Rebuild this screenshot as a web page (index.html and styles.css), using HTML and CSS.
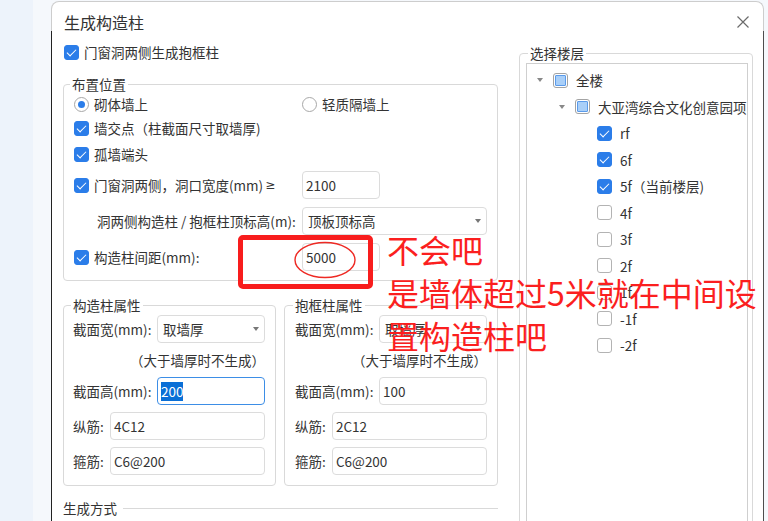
FILE: index.html
```html
<!DOCTYPE html>
<html lang="zh-CN">
<head>
  <meta charset="UTF-8">
  <title>生成构造柱</title>
  <link rel="stylesheet" href="styles.css">
</head>
<body>
<div class="page">
  <div class="strip-a"></div>
  <div class="strip-b"></div>

  <!-- Dialog -->
  <div class="dialog">
    <div class="dialog-head">
      <span class="dialog-title">生成构造柱</span>
      <svg class="close" width="12" height="12" viewBox="0 0 12 12"><path d="M0.5 0.5L11.5 11.5M11.5 0.5L0.5 11.5" stroke="#6b6b6b" stroke-width="1.2" fill="none"/></svg>
    </div>

    <div class="dialog-body">
      <div class="col-left">
        <div class="top-check"><span class="cb on"></span>门窗洞两侧生成抱框柱</div>

        <fieldset class="group place">
          <legend>布置位置</legend>
          <div class="row row-first">
            <span class="w-label"><span class="radio on"></span>砌体墙上</span>
            <span class="w-label"><span class="radio"></span>轻质隔墙上</span>
          </div>
          <div class="row"><span class="cb on"></span>墙交点（柱截面尺寸取墙厚)</div>
          <div class="row"><span class="cb on"></span>孤墙端头</div>
          <div class="row row-field">
            <span class="w-label"><span class="cb on"></span>门窗洞两侧，洞口宽度(mm)<span class="sym">≥</span></span>
            <span class="input short">2100</span>
          </div>
          <div class="row row-field">
            <span class="w-label sub-label">洞两侧构造柱 / 抱框柱顶标高(m):</span>
            <span class="input select long">顶板顶标高<i class="caret"></i></span>
          </div>
          <div class="row row-field">
            <span class="w-label"><span class="cb on"></span>构造柱间距(mm):</span>
            <span class="input short">5000</span>
          </div>
        </fieldset>

        <div class="props">
          <fieldset class="group prop prop-left">
            <legend>构造柱属性</legend>
            <div class="prop-row">
              <span class="lab-wide">截面宽(mm):</span>
              <span class="input select fill">取墙厚<i class="caret"></i></span>
            </div>
            <div class="note-row">（大于墙厚时不生成）</div>
            <div class="prop-row">
              <span class="lab-wide">截面高(mm):</span>
              <span class="input fill focus"><span class="sel">200</span></span>
            </div>
            <div class="prop-row">
              <span class="lab-short">纵筋:</span>
              <span class="input fill">4C12</span>
            </div>
            <div class="prop-row">
              <span class="lab-short">箍筋:</span>
              <span class="input fill">C6@200</span>
            </div>
          </fieldset>

          <fieldset class="group prop prop-right">
            <legend>抱框柱属性</legend>
            <div class="prop-row">
              <span class="lab-wide">截面宽(mm):</span>
              <span class="input select fill">取墙厚<i class="caret"></i></span>
            </div>
            <div class="note-row">（大于墙厚时不生成）</div>
            <div class="prop-row">
              <span class="lab-wide">截面高(mm):</span>
              <span class="input fill">100</span>
            </div>
            <div class="prop-row">
              <span class="lab-short">纵筋:</span>
              <span class="input fill">2C12</span>
            </div>
            <div class="prop-row">
              <span class="lab-short">箍筋:</span>
              <span class="input fill">C6@200</span>
            </div>
          </fieldset>
        </div>

        <div class="section-line">生成方式</div>
      </div>

      <div class="col-right">
        <fieldset class="group floors">
          <legend>选择楼层</legend>
          <div class="tree">
            <div class="tree-row"><span class="arrow"></span><span class="cb part"></span>全楼</div>
            <div class="tree-row lv1"><span class="arrow"></span><span class="cb part"></span>大亚湾综合文化创意园项目</div>
            <div class="tree-row lv2"><span class="spacer"></span><span class="cb on"></span>rf</div>
            <div class="tree-row lv2"><span class="spacer"></span><span class="cb on"></span>6f</div>
            <div class="tree-row lv2"><span class="spacer"></span><span class="cb on"></span>5f（当前楼层)</div>
            <div class="tree-row lv2"><span class="spacer"></span><span class="cb"></span>4f</div>
            <div class="tree-row lv2"><span class="spacer"></span><span class="cb"></span>3f</div>
            <div class="tree-row lv2"><span class="spacer"></span><span class="cb"></span>2f</div>
            <div class="tree-row lv2"><span class="spacer"></span><span class="cb"></span>1f</div>
            <div class="tree-row lv2"><span class="spacer"></span><span class="cb"></span>-1f</div>
            <div class="tree-row lv2"><span class="spacer"></span><span class="cb"></span>-2f</div>
          </div>
        </fieldset>
      </div>
    </div>
  </div>

  <!-- Red annotations drawn over the dialog -->
  <div class="mark-box"></div>
  <svg class="mark-ring" width="64" height="40" viewBox="0 0 64 40"><ellipse cx="32" cy="20" rx="30" ry="17.5" fill="none" stroke="#ee2a24" stroke-width="1.4"/></svg>
  <div class="mark-text">不会吧<br>是墙体超过5米就在中间设<br>置构造柱吧</div>
</div>
</body>
</html>
```

FILE: styles.css
```css
* {
  box-sizing: border-box;
}
body {
  margin: 0;
  font-family: "Noto Sans CJK SC", "Microsoft YaHei", sans-serif;
  font-size: 13.5px;
  color: #333;
  background: #f5f8fc;
  overflow: hidden;
}
.page {
  position: relative;
  display: flex;
  width: 768px;
  height: 521px;
  overflow: hidden;
}
.strip-a {
  flex: none;
  width: 33px;
  background: #edf3fb;
}
.strip-b {
  flex: none;
  width: 18px;
}

/* dialog frame */
.dialog {
  flex: none;
  width: 713px;
  height: 560px;
  margin-top: 1px;
  display: flex;
  flex-direction: column;
}
.dialog-head {
  height: 30px;
  padding: 10px 14px 0 12px;
  border: 1px solid #cdcdcd;
  border-bottom: 0;
  border-radius: 8px 8px 0 0;
  background: #fff;
  display: flex;
  justify-content: space-between;
  align-items: center;
}
.dialog-title {
  font-size: 16px;
  line-height: 20px;
  color: #333;
}
.dialog-body {
  flex: 1;
  display: flex;
  background: #fff;
  border-left: 1px solid #222;
  border-right: 1px solid #4d4d4d;
}
.col-left {
  flex: none;
  width: 446px;
  padding: 12px 0 0 11px;
}
.col-right {
  flex: none;
  width: 234px;
  margin-left: 21px;
}

/* controls */
.cb {
  flex: none;
  width: 15px;
  height: 15px;
  margin-right: 5px;
  border: 1px solid #b3b3b3;
  border-radius: 3px;
  background: #fff;
  display: inline-flex;
  align-items: center;
  justify-content: center;
}
.cb.on {
  background: #2b7de9;
  border-color: #2b7de9;
}
.cb.on::after {
  content: "";
  width: 4px;
  height: 8px;
  border: solid #fff;
  border-width: 0 1.8px 1.8px 0;
  transform: translateY(-1px) rotate(45deg);
}
.cb.part {
  border-color: #a3a3a3;
}
.cb.part::after {
  content: "";
  width: 9px;
  height: 9px;
  border: 1px solid #5b9bea;
  border-radius: 1px;
  background: #a9cff8;
}
.radio {
  flex: none;
  width: 15px;
  height: 15px;
  margin-right: 5px;
  border: 1px solid #a8a8a8;
  border-radius: 50%;
  display: inline-flex;
  align-items: center;
  justify-content: center;
}
.radio.on::after {
  content: "";
  width: 7px;
  height: 7px;
  border-radius: 50%;
  background: #2b7de9;
}
.sym {
  font-family: "DejaVu Sans", sans-serif;
  font-size: 12px;
  margin-left: 2px;
}
.input {
  height: 28px;
  padding: 0 3px;
  border: 1px solid #dcdcdc;
  border-radius: 4px;
  background: #fff;
  display: flex;
  align-items: center;
  white-space: nowrap;
}
.short {
  width: 78px;
}
.long {
  width: 186px;
}
.fill {
  flex: 1;
}
.select {
  justify-content: space-between;
  padding: 0 5px 0 5px;
}
.caret {
  width: 0;
  height: 0;
  border-left: 3px solid transparent;
  border-right: 3px solid transparent;
  border-top: 4px solid #777;
}
.focus {
  border-color: #3d8ee6;
}
.sel {
  background: #0a6fd6;
  color: #fff;
  line-height: 19px;
}

/* group boxes */
.group {
  margin: 0;
  min-width: 0;
  border: 1px solid #d9d9d9;
  border-radius: 4px;
}
.group legend {
  padding: 0 2px;
  line-height: 18px;
  font-size: 13.5px;
}
.top-check {
  height: 18px;
  margin-left: 1px;
  display: flex;
  align-items: center;
}
.place {
  margin-top: 14px;
  padding: 0 10px 5px 10px;
}
.place legend {
  margin-left: -4px;
}
.row {
  height: 26px;
  display: flex;
  align-items: center;
}
.row-first {
  height: 22px;
}
.row-field {
  height: 36px;
}
.w-label {
  flex: none;
  width: 228px;
  display: flex;
  align-items: center;
  white-space: nowrap;
}
.sub-label {
  padding-left: 23px;
}

.props {
  display: flex;
  gap: 8px;
  margin-top: 15px;
}
.prop {
  padding: 1px 10px 10px 10px;
}
.prop-left {
  width: 213px;
  padding-left: 9px;
}
.prop-right {
  width: 214px;
}
.prop legend {
  margin-left: -2px;
}
.prop-row {
  height: 28px;
  display: flex;
  align-items: center;
  margin-top: 7px;
}
.prop-row:first-of-type {
  margin-top: 0;
}
.lab-wide {
  flex: none;
  width: 84px;
}
.lab-short {
  flex: none;
  width: 37px;
}
.note-row {
  height: 20px;
  margin-top: 7px;
  display: flex;
  align-items: center;
  justify-content: flex-end;
  white-space: nowrap;
}
.section-line {
  height: 20px;
  margin-top: 12px;
  display: flex;
  align-items: center;
}
.section-line::after {
  content: "";
  flex: 1;
  margin-left: 6px;
  border-top: 1px solid #d9d9d9;
}

/* floor tree */
.floors {
  width: 234px;
  height: 560px;
  margin-top: 13px;
  padding: 1px 4px 0 6px;
}
.floors legend {
  margin-left: 2px;
}
.tree {
  height: 520px;
  padding-top: 3px;
  border: 1px solid #cfcfcf;
  overflow: hidden;
}
.tree-row {
  height: 26.5px;
  padding-left: 8px;
  display: flex;
  align-items: center;
  white-space: nowrap;
}
.tree-row .cb {
  margin-right: 8px;
}
.lv1 {
  padding-left: 30px;
}
.lv2 {
  padding-left: 52px;
}
.arrow,
.spacer {
  flex: none;
  width: 10px;
  height: 10px;
  margin-right: 8px;
  display: flex;
  align-items: center;
  justify-content: center;
}
.arrow::after {
  content: "";
  border-left: 3.5px solid transparent;
  border-right: 3.5px solid transparent;
  border-top: 4.5px solid #888;
}

/* red annotations */
.mark-box {
  position: absolute;
  left: 238px;
  top: 235px;
  width: 135px;
  height: 54px;
  border: 5px solid #f81d1d;
  border-radius: 5px;
}
.mark-ring {
  position: absolute;
  left: 293px;
  top: 240px;
}
.mark-text {
  position: absolute;
  left: 387px;
  top: 228px;
  font-size: 32px;
  line-height: 43px;
  color: #fb1f1f;
  white-space: nowrap;
}
```
